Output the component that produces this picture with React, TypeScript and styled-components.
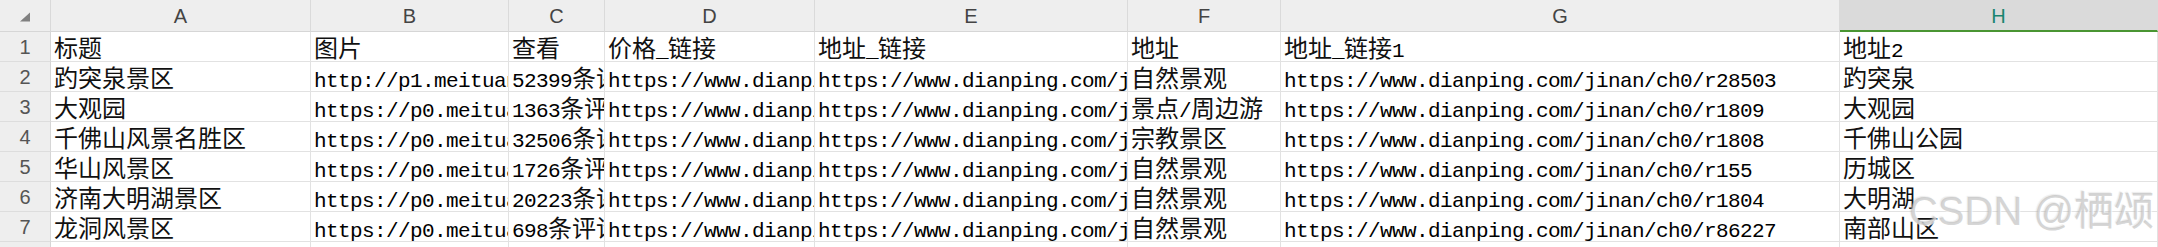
import React from "react";
import styled, { createGlobalStyle } from "styled-components";

const GlobalStyle = createGlobalStyle`
  html, body {
    margin: 0;
    padding: 0;
    background: #ffffff;
    overflow: hidden;
  }
`;

const COLS = ["A", "B", "C", "D", "E", "F", "G", "H"];
const SELECTED_COL = "H";

const ROWS: string[][] = [
  ["标题", "图片", "查看", "价格_链接", "地址_链接", "地址", "地址_链接1", "地址2"],
  [
    "趵突泉景区",
    "http://p1.meituan.net/poi/photo.jpg",
    "52399条评论",
    "https://www.dianping.com/shop/1",
    "https://www.dianping.com/jinan/ch0/r28503",
    "自然景观",
    "https://www.dianping.com/jinan/ch0/r28503",
    "趵突泉",
  ],
  [
    "大观园",
    "https://p0.meituan.net/poi/photo.jpg",
    "1363条评论",
    "https://www.dianping.com/shop/2",
    "https://www.dianping.com/jinan/ch0/r1809",
    "景点/周边游",
    "https://www.dianping.com/jinan/ch0/r1809",
    "大观园",
  ],
  [
    "千佛山风景名胜区",
    "https://p0.meituan.net/poi/photo.jpg",
    "32506条评论",
    "https://www.dianping.com/shop/3",
    "https://www.dianping.com/jinan/ch0/r1808",
    "宗教景区",
    "https://www.dianping.com/jinan/ch0/r1808",
    "千佛山公园",
  ],
  [
    "华山风景区",
    "https://p0.meituan.net/poi/photo.jpg",
    "1726条评论",
    "https://www.dianping.com/shop/4",
    "https://www.dianping.com/jinan/ch0/r155",
    "自然景观",
    "https://www.dianping.com/jinan/ch0/r155",
    "历城区",
  ],
  [
    "济南大明湖景区",
    "https://p0.meituan.net/poi/photo.jpg",
    "20223条评论",
    "https://www.dianping.com/shop/5",
    "https://www.dianping.com/jinan/ch0/r1804",
    "自然景观",
    "https://www.dianping.com/jinan/ch0/r1804",
    "大明湖",
  ],
  [
    "龙洞风景区",
    "https://p0.meituan.net/poi/photo.jpg",
    "698条评论",
    "https://www.dianping.com/shop/6",
    "https://www.dianping.com/jinan/ch0/r86227",
    "自然景观",
    "https://www.dianping.com/jinan/ch0/r86227",
    "南部山区",
  ],
];

const Sheet = styled.div`
  position: relative;
  display: grid;
  grid-template-columns: 51px 260px 198px 96px 210px 313px 153px 559px 1fr;
  grid-template-rows: 32px repeat(8, 30px);
  width: 2158px;
  height: 247px;
  overflow: hidden;
  background: #ffffff;
`;

const Corner = styled.div`
  box-sizing: border-box;
  display: flex;
  align-items: center;
  justify-content: center;
  background: #eeeeee;
  border-right: 1px solid #d9d9d9;
  border-bottom: 1px solid #d6d6d6;
  padding-top: 2px;
`;

const ColHeader = styled.div<{ $selected?: boolean }>`
  box-sizing: border-box;
  display: flex;
  align-items: center;
  justify-content: center;
  background: ${(p) => (p.$selected ? "#dadada" : "#eeeeee")};
  border-right: 1px solid #dadada;
  border-bottom: ${(p) => (p.$selected ? "2px solid #4a9532" : "1px solid #d6d6d6")};
  color: ${(p) => (p.$selected ? "#1a8570" : "#444444")};
  font-family: "Liberation Sans", Arial, sans-serif;
  font-size: 20px;
  line-height: 1;
  padding-top: ${(p) => (p.$selected ? "2px" : "1px")};
`;

const RowHeader = styled.div`
  box-sizing: border-box;
  display: flex;
  align-items: center;
  justify-content: center;
  background: #eeeeee;
  border-right: 1px solid #d6d6d6;
  border-bottom: 1px solid #dddddd;
  color: #555555;
  font-family: "Liberation Sans", Arial, sans-serif;
  font-size: 20px;
  line-height: 1;
`;

const Cell = styled.div`
  box-sizing: border-box;
  border-right: 1px solid #e2e2e2;
  border-bottom: 1px solid #e2e2e2;
  padding: 0 3px;
  height: 30px;
  overflow: hidden;
  white-space: nowrap;
  color: #000000;
  font-family: "Noto Sans CJK SC", sans-serif;
  font-size: 24px;
  line-height: 30px;
`;

const Han = styled.span`
  font-family: "Noto Sans CJK SC", sans-serif;
  font-size: 24px;
  color: #111111;
`;

const Latin = styled.span`
  font-family: "Liberation Mono", "Courier New", monospace;
  font-size: 21px;
  letter-spacing: -0.6px;
  line-height: 1;
`;

const Watermark = styled.div`
  position: absolute;
  right: 4px;
  top: 184px;
  font-family: "Liberation Sans", "Noto Sans CJK SC", sans-serif;
  font-size: 40px;
  line-height: 48px;
  color: rgba(180, 180, 180, 0.55);
  text-shadow: 1px 1px 1px rgba(255, 255, 255, 0.8), -1px -1px 1px rgba(120, 120, 120, 0.15);
  white-space: nowrap;
  pointer-events: none;
`;

const WatermarkHan = styled.span`
  font-family: "Noto Sans CJK SC", sans-serif;
`;

const CJK = /[\u2e80-\u9fff\uff00-\uffef]+|[^\u2e80-\u9fff\uff00-\uffef]+/g;
const isCJK = (s: string) => /[\u2e80-\u9fff\uff00-\uffef]/.test(s);

function MixedText({ text }: { text: string }) {
  const parts = text.match(CJK) ?? [];
  return (
    <>
      {parts.map((p, i) =>
        isCJK(p) ? <Han key={i}>{p}</Han> : <Latin key={i}>{p}</Latin>
      )}
    </>
  );
}

function CornerMark() {
  return (
    <svg width="11" height="10" viewBox="0 0 11 10">
      <polygon points="0,9.5 10,0.5 10,9.5" fill="#808080" />
    </svg>
  );
}

export default function App() {
  return (
    <>
      <GlobalStyle />
      <Sheet>
        <Corner>
          <CornerMark />
        </Corner>
        {COLS.map((c) => (
          <ColHeader key={c} $selected={c === SELECTED_COL}>
            {c}
          </ColHeader>
        ))}
        {ROWS.map((row, r) => (
          <React.Fragment key={r}>
            <RowHeader>{r + 1}</RowHeader>
            {row.map((v, c) => (
              <Cell key={c}>
                <MixedText text={v} />
              </Cell>
            ))}
          </React.Fragment>
        ))}
        <RowHeader>8</RowHeader>
        {COLS.map((c) => (
          <Cell key={c} />
        ))}
        <Watermark>
          CSDN @<WatermarkHan>栖颂</WatermarkHan>
        </Watermark>
      </Sheet>
    </>
  );
}
